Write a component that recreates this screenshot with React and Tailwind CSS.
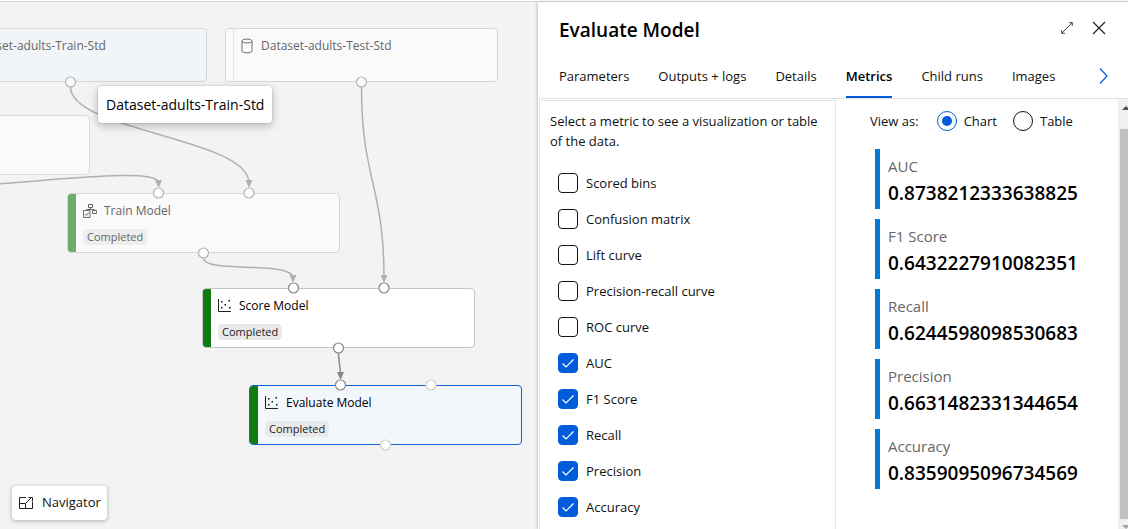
import React, { useState } from "react";

const METRICS = [
  "Scored bins",
  "Confusion matrix",
  "Lift curve",
  "Precision-recall curve",
  "ROC curve",
  "AUC",
  "F1 Score",
  "Recall",
  "Precision",
  "Accuracy",
];

const VALUES = [
  ["AUC", "0.8738212333638825"],
  ["F1 Score", "0.6432227910082351"],
  ["Recall", "0.6244598098530683"],
  ["Precision", "0.6631482331344654"],
  ["Accuracy", "0.8359095096734569"],
];

const TABS = ["Parameters", "Outputs + logs", "Details", "Metrics", "Child runs", "Images"];

function DatabaseIcon() {
  return (
    <svg width="12" height="16" viewBox="0 0 12 16" fill="none" stroke="#6e6e6e" aria-hidden="true">
      <ellipse cx="6" cy="3" rx="5" ry="2" />
      <path d="M1 3v10c0 1.1 2.2 1.8 5 1.8s5-.7 5-1.8V3" />
    </svg>
  );
}

function TrainIcon() {
  return (
    <svg width="14" height="14" viewBox="0 0 14 14" fill="none" stroke="#6a6a6a" aria-hidden="true">
      <path d="M5.5.5h4v3h-4zM9.500 6.500h4v3h-4zM.5 6.500h6.500v7H.5zM7.500 3.500v2M3.500 6.500v-1h8v1" />
      <path d="M2 10l1.500 1.500 2.300-3" />
    </svg>
  );
}

function ScatterIcon() {
  return (
    <svg width="14" height="14" viewBox="0 0 14 14" aria-hidden="true">
      <path d="M.5 0v12.500H13" fill="none" stroke="#222" />
      <path
        d="M3 2h1.500v1.500H3zM10.500 1H12v1.500h-1.500zM6.500 5H8v1.500H6.500zM3 8h1.500v1.500H3zM11 8h1.500v1.500H11z"
        fill="#111"
      />
    </svg>
  );
}

function Node({ className, bar, icon, title, faded, status }) {
  return (
    <div className={`absolute flex w-[273px] overflow-hidden rounded border ${className}`}>
      <div className={`w-2 shrink-0 ${bar}`} />
      <div className="flex flex-col items-start pl-[7px] pt-[7px]">
        {title && (
          <div className="flex h-5 items-center">
            <div className={`flex shrink-0 ${status ? "w-[21px]" : "w-5"}`}>{icon}</div>
            <span
              className={`whitespace-nowrap text-xs ${status ? "font-medium" : ""} ${
                faded ? "text-[#666]" : "text-black"
              }`}
            >
              {title}
            </span>
          </div>
        )}
        {status && (
          <span
            className={`mt-2 rounded px-1 text-[11px] leading-4 ${
              faded ? "bg-[#eee] text-[#666]" : "bg-[#e9e9e9] text-[#222]"
            }`}
          >
            {status}
          </span>
        )}
      </div>
    </div>
  );
}

function Arrow({ x, y, fill = "#b1b0af" }) {
  return <path d={`M${x - 3.5} ${y - 8}h7l-3.5 8z`} fill={fill} />;
}

function Canvas() {
  return (
    <main className="relative min-w-0 flex-1 overflow-hidden bg-[#f3f3f3]">
      <Node
        className="-left-[66px] top-[26px] h-[54px] border-[#d6d6d6] bg-[#f1f5f8]"
        bar=""
        icon={<DatabaseIcon />}
        title="Dataset-adults-Train-Std"
        faded
      />
      <Node
        className="left-[225px] top-[26px] h-[54px] border-[#d6d6d6] bg-[#fafafa]"
        bar="border-r border-[#e6e6e6]"
        icon={<DatabaseIcon />}
        title="Dataset-adults-Test-Std"
        faded
      />
      <Node className="-left-[183px] top-[113px] h-[60px] border-[#dcdcdc] bg-[#fafafa]" bar="" />
      <Node
        className="left-[67px] top-[191px] h-[60px] border-[#d6d6d6] bg-[#fafafa]"
        bar="bg-[#6bad6b]"
        icon={<TrainIcon />}
        title="Train Model"
        status="Completed"
        faded
      />
      <Node
        className="left-[202px] top-[286px] h-[60px] border-[#c4c4c4] bg-white"
        bar="bg-[#107c10]"
        icon={<ScatterIcon />}
        title="Score Model"
        status="Completed"
      />
      <Node
        className="left-[249px] top-[383px] h-[60px] border-[#0f62d6] bg-[#f2f7fc]"
        bar="bg-[#107c10]"
        icon={<ScatterIcon />}
        title="Evaluate Model"
        status="Completed"
      />

      <svg
        className="absolute left-0 top-0"
        width="538"
        height="527"
        viewBox="0 2 538 527"
        fill="none"
        aria-hidden="true"
      >
        <g stroke="#b1b0af" strokeWidth="1.500">
          <path d="M70.500 87C70.500 131 249 138 249 183" />
          <path d="M361.500 87C361.500 180 384 185 384 278" />
          <path d="M-10 184.500C50 181 158.500 167 158.500 183" />
          <path d="M203.500 258C203.500 274 293 260 293 278" />
          <path d="M338.500 353C338.500 362 340.500 366 340.500 375" stroke="#8a8886" />
        </g>
        <Arrow x={249} y={188} />
        <Arrow x={158.5} y={188} />
        <Arrow x={384} y={283} />
        <Arrow x={293} y={283} />
        <Arrow x={340.5} y={380} fill="#8a8886" />
        <g fill="#fdfdfd" stroke="#b3b3b3" strokeWidth="1.200">
          <circle cx="70.500" cy="82" r="5" />
          <circle cx="361.500" cy="82" r="5" />
          <circle cx="158.500" cy="193" r="5" />
          <circle cx="249" cy="193" r="5" />
          <circle cx="203.500" cy="253" r="5" />
        </g>
        <g fill="#fff" stroke="#8a8886" strokeWidth="1.200">
          <circle cx="293.500" cy="288" r="5" />
          <circle cx="384" cy="288" r="5" />
          <circle cx="338.500" cy="348" r="5" />
          <circle cx="340.500" cy="385" r="5" />
        </g>
        <g fill="#fff" stroke="#cfcfcf" strokeWidth="1.200">
          <circle cx="431" cy="385" r="5" />
          <circle cx="385.500" cy="445" r="5" />
        </g>
      </svg>

      <div
        role="tooltip"
        className="absolute left-[98px] top-[84px] flex h-[37px] items-center whitespace-nowrap rounded-sm bg-white px-2 text-sm text-black shadow-[0_3px_8px_rgba(0,0,0,0.25),0_0_2px_rgba(0,0,0,0.2)]"
      >
        Dataset-adults-Train-Std
      </div>

      <button
        type="button"
        className="absolute bottom-[9px] left-3 flex h-[34px] items-center gap-2 rounded-sm bg-white px-[6px] text-[13px] text-[#111] shadow-[0_1px_4px_rgba(0,0,0,0.3)]"
      >
        <svg width="16" height="14" viewBox="0 0 16 14" fill="none" stroke="#222" aria-hidden="true">
          <path d="M8 1.500H1.500v11h13V6M1.500 7.500h6v5M7.500 7.500L14 1M10.500 1.500h4v4" />
        </svg>
        Navigator
      </button>
    </main>
  );
}

function MetricPicker({ selected, onToggle }) {
  return (
    <fieldset className="w-[297px] shrink-0 border border-b-0 border-[#e6e6e6] pl-[10px] pr-2 pt-[10px]">
      <p className="text-[13px] leading-5 text-[#111]">
        Select a metric to see a visualization or table of the data.
      </p>
      <div className="mt-[22px] flex flex-col gap-4 pl-2">
        {METRICS.map((name) => (
          <label key={name} className="flex items-center gap-2 text-[13px] leading-5 text-[#111]">
            <span className="grid size-5 shrink-0">
              <input
                type="checkbox"
                checked={selected.includes(name)}
                onChange={() => onToggle(name)}
                className="peer col-start-1 row-start-1 size-5 appearance-none rounded-sm border border-[#111] bg-white checked:border-[#015cda] checked:bg-[#015cda]"
              />
              <svg
                className="pointer-events-none invisible col-start-1 row-start-1 peer-checked:visible"
                width="20"
                height="20"
                viewBox="0 0 20 20"
                fill="none"
                stroke="#fff"
                strokeWidth="1.200"
                aria-hidden="true"
              >
                <path d="M4.500 10.500l3.500 3.500 7.500-7.500" />
              </svg>
            </span>
            {name}
          </label>
        ))}
      </div>
    </fieldset>
  );
}

function ViewOption({ label, checked, onSelect }) {
  return (
    <label className="flex items-center gap-[7px]">
      <span className="grid size-5 place-items-center">
        <input
          type="radio"
          name="view"
          checked={checked}
          onChange={onSelect}
          className="peer col-start-1 row-start-1 size-5 appearance-none rounded-full border border-[#111] bg-white checked:border-[#015cda]"
        />
        <span className="pointer-events-none invisible col-start-1 row-start-1 size-[10px] rounded-full bg-[#015cda] peer-checked:visible" />
      </span>
      {label}
    </label>
  );
}

function MetricValues({ selected }) {
  const [view, setView] = useState("Chart");
  return (
    <section className="min-w-0 flex-1 pl-[34px] pt-[11px]">
      <div role="radiogroup" aria-label="View as" className="flex items-center text-[13px] leading-5 text-[#111]">
        <span className="mr-[18px]">View as:</span>
        <div className="flex gap-4">
          {["Chart", "Table"].map((v) => (
            <ViewOption key={v} label={v} checked={view === v} onSelect={() => setView(v)} />
          ))}
        </div>
      </div>
      <dl className="mt-[18px] flex flex-col gap-[10px] pl-[5px]">
        {VALUES.filter(([name]) => selected.includes(name)).map(([name, value]) => (
          <div key={name} className="h-[60px] border-l-[5px] border-[#0078d4] pl-2 pt-[5px]">
            <dt className="text-[15px] leading-6 text-[#666]">{name}</dt>
            <dd className="text-[19px] font-semibold leading-[30px] text-black">{value}</dd>
          </div>
        ))}
      </dl>
    </section>
  );
}

function ScrollTrack() {
  return (
    <div className="flex w-[10px] shrink-0 flex-col overflow-hidden bg-[#f1f1f1] pl-[2px]" aria-hidden="true">
      <svg className="ml-[2px] h-[30px] shrink-0" width="8" height="30" viewBox="0 0 8 30">
        <path d="M0 11l4-4 4 4z" fill="#505050" />
      </svg>
      <div className="flex-1 bg-[#c1c1c1]" />
      <svg className="ml-[2px] h-[10px] shrink-0" width="8" height="10" viewBox="0 0 8 10">
        <path d="M0 6h8l-4 4z" fill="#a3a3a3" />
      </svg>
    </div>
  );
}

function DetailsPanel() {
  const [selected, setSelected] = useState(METRICS.slice(5));
  const toggle = (name) =>
    setSelected((s) => (s.includes(name) ? s.filter((n) => n !== name) : [...s, name]));

  return (
    <aside className="relative flex w-[590px] shrink-0 flex-col overflow-hidden bg-white pl-px shadow-[-1px_0_3px_rgba(0,0,0,0.2)]">
      <header className="flex items-start justify-between pb-2 pl-5 pr-[22px] pt-[14px]">
        <h1 className="text-[19px] font-semibold leading-7 text-black">Evaluate Model</h1>
        <div className="flex h-6 items-center gap-[19px]">
          <button type="button" aria-label="Expand panel">
            <svg width="12" height="12" viewBox="0 0 12 12" fill="none" stroke="#444" aria-hidden="true">
              <path d="M1 11L11 1M8 .700h3.300V4M.700 8v3.300H4" />
            </svg>
          </button>
          <button type="button" aria-label="Close panel">
            <svg width="14" height="14" viewBox="0 0 14 14" fill="none" stroke="#222" strokeWidth="1.200" aria-hidden="true">
              <path d="M1 1l12 12M13 1L1 13" />
            </svg>
          </button>
        </div>
      </header>
      <nav className="flex h-[47px] items-stretch justify-between border-b border-[#e1e1e1] pl-5 pr-5">
        <div role="tablist" className="flex gap-[29px]">
          {TABS.map((t) => (
            <button
              key={t}
              type="button"
              role="tab"
              aria-selected={t === "Metrics"}
              className={`whitespace-nowrap border-b-2 pt-[5px] text-[13px] ${
                t === "Metrics"
                  ? "border-[#015cda] font-semibold text-black"
                  : "border-transparent text-[#111]"
              }`}
            >
              {t}
            </button>
          ))}
        </div>
        <button type="button" aria-label="More tabs" className="pt-[2px]">
          <svg width="9" height="16" viewBox="0 0 9 16" fill="none" stroke="#015cda" strokeWidth="1.200" aria-hidden="true">
            <path d="M1 .500L8 8l-7 7.500" />
          </svg>
        </button>
      </nav>
      <div className="flex min-h-0 flex-1">
        <div className="flex min-w-0 flex-1 pt-px">
          <MetricPicker selected={selected} onToggle={toggle} />
          <MetricValues selected={selected} />
        </div>
        <ScrollTrack />
      </div>
    </aside>
  );
}

export default function App() {
  return (
    <div className="flex h-screen flex-col bg-white pt-px font-['Open_Sans','Noto_Sans',sans-serif]">
      <div className="flex min-h-0 flex-1 border-t border-[#d8d8d8]">
        <Canvas />
        <DetailsPanel />
      </div>
    </div>
  );
}
